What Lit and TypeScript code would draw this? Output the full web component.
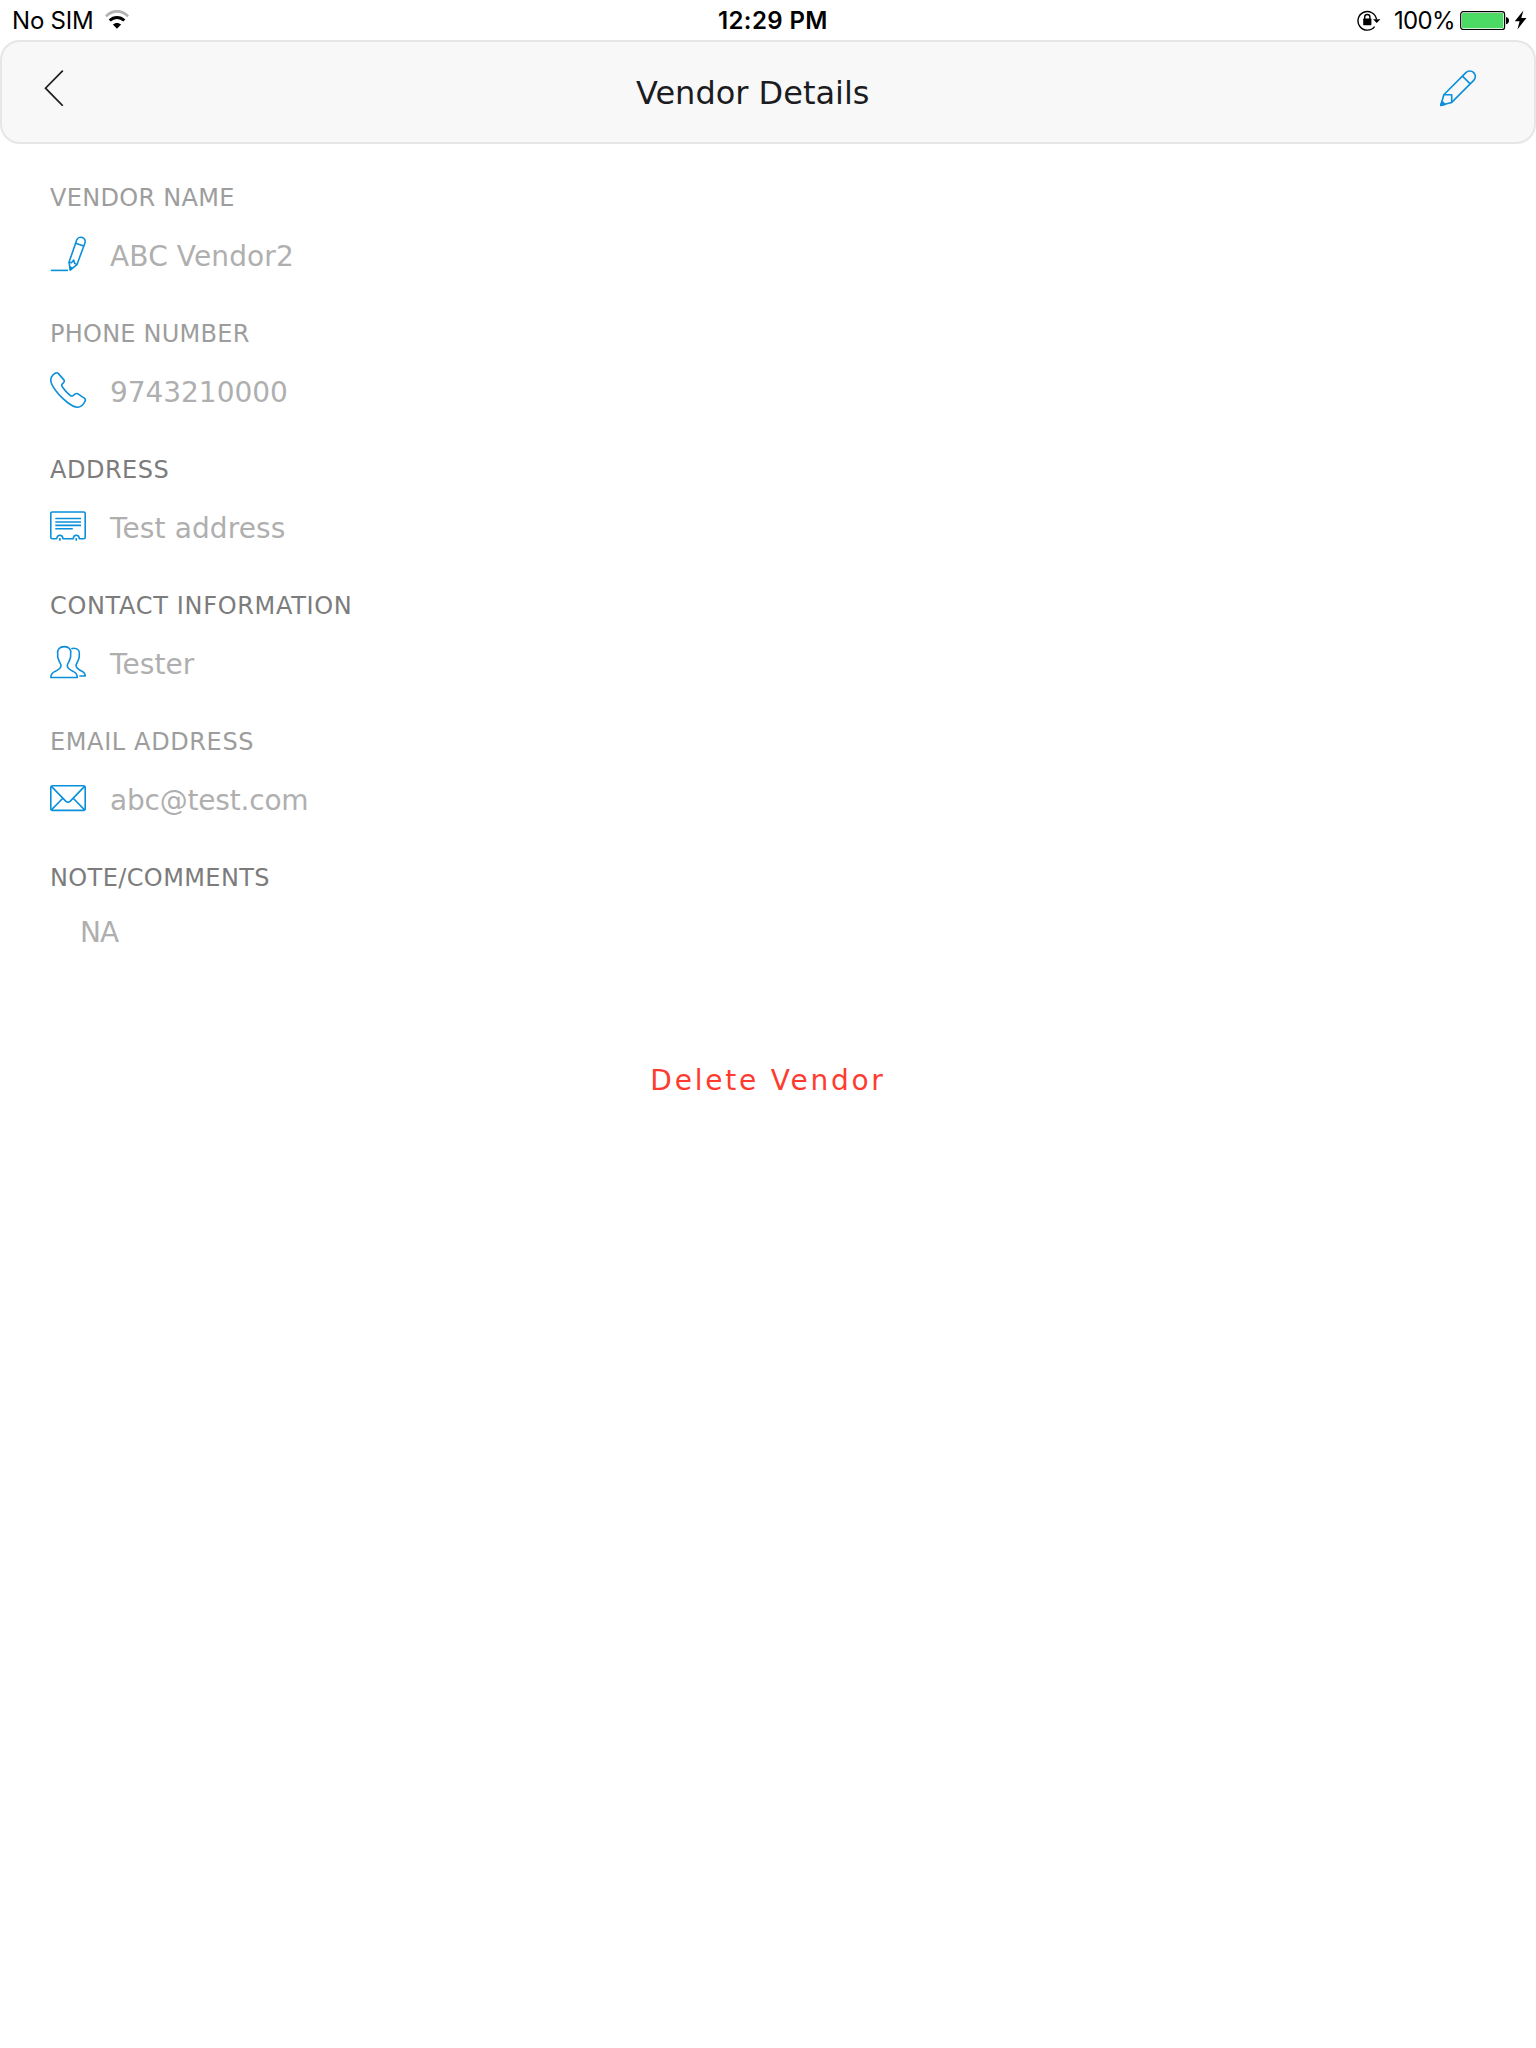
import { LitElement, html, css, svg, nothing, SVGTemplateResult } from "lit";
import { customElement, property } from "lit/decorators.js";
import { styleMap } from "lit/directives/style-map.js";

type IconName = "edit" | "pencil" | "phone" | "card" | "people" | "mail";

const ICONS: Record<IconName, SVGTemplateResult> = {
  edit: svg`
    <path d="M3.8 24.7 25.9 2.6A5.5 5.5 0 0 1 33.7 10.4L11.7 32.4.9 35.2Z"/>
    <path d="M22.4 6.1 30.2 13.9M3.8 24.7H11.7V32.4"/>
    <path d="M.7 35.5 1.9 31.4 4.9 34.4Z" fill="currentColor"/>`,
  pencil: svg`
    <path d="M.8 34.4H18"/>
    <path d="M19 26.3 26.7 4.1A4.3 4.3 0 0 1 34.9 7L27 28.6 20.4 33.9Z"/>
    <path d="M25.6 7.2 33.7 10.1M19 26.3 21.4 26.8 23.8 24.1 24.6 27.4 27 28.6"/>
    <path d="M20.2 34 20 31 22.4 32.2Z" fill="currentColor"/>`,
  phone: svg`
    <path d="M5.2 1.3C6.4.6 7.6.7 8.4 1.6L13.9 7.9C14.6 8.7 14.5 9.5 13.9 10.2L12.2 12.1C11.5 12.9 11.6 13.9 12.2 14.7 14.2 17.6 17 20.8 20.1 23.3 21 24 22.1 24.2 23 23.6L25.2 21.9C26.1 21.3 27 21.3 27.9 21.8L34.3 26.1C35.4 26.9 35.6 28.2 35 29.3 33.6 32.5 31 34.8 28 35.2 25 35.6 21.5 33.5 17.5 30.5 12 26.2 5.6 19.5 2.2 13.2.7 10.2.3 7.6 1.4 5.2 2.2 3.4 3.6 2.2 5.2 1.3Z"/>`,
  card: svg`
    <path d="M6.8 30.8H2.3A1.5 1.5 0 0 1 .8 29.3V5.5A1.5 1.5 0 0 1 2.3 4H33.7A1.5 1.5 0 0 1 35.2 5.5V29.3A1.5 1.5 0 0 1 33.7 30.8H29.4C29.2 28.5 28 27.3 26.3 27.3S23.4 28.5 23.2 30.8H13C12.8 28.5 11.6 27.3 9.9 27.3S7 28.5 6.8 30.8M9.9 32.7V30M26.3 32.7V30"/>
    <path d="M5.3 10.5H31M5.3 14H31M5.3 17.4H31M5.3 20.8H22.8"/>`,
  people: svg`
    <path d="M.8 33.5C.8 30 2.3 28.7 5 27.4 9 25.6 11 24.3 11 21.8 11 19.8 9.6 18.6 9 16.8 8.5 15.2 7.8 14.3 7.7 12.6 7.6 11.6 7.9 11 7.7 9.9 7 5.4 9.8 2.6 14.3 2.6S21.4 5.4 20.7 9.9C20.5 11 20.8 11.6 20.6 12.6 20.4 14.3 19.8 15.2 19.3 16.8 18.7 18.6 17.3 19.8 17.3 21.8 17.3 24.3 19.2 25.6 23.2 27.4 25.9 28.7 27.3 30 27.3 33.5Z"/>
    <path d="M21.3 4.9C22.3 4.3 23.3 4.1 24.3 4.2 28 4.4 29.9 7 29.3 10.6 29.1 11.6 29.4 12.2 29.2 13.2 28.9 14.8 28.4 15.6 27.9 17.1 27.3 18.8 26.1 19.7 26.1 21.6 26.1 24 27.9 25.3 31.4 27 34 28.2 35.2 29.3 35.2 32H29.3"/>`,
  mail: svg`
    <rect x=".8" y="5.7" width="34.4" height="24.7" rx="1.8"/>
    <path d="M1.4 6.4 15.7 21.1Q18 23.3 20.3 21.1L34.6 6.4M1.4 29.9 12.8 18.3M34.6 29.9 23.2 18.3"/>`,
};

interface Field {
  label: string;
  value: string;
  icon?: IconName;
  readonly?: boolean;
  labelTracking: number;
  valueTracking: number;
}

const FIELDS: Field[] = [
  { label: "VENDOR NAME", value: "ABC Vendor2", icon: "pencil", readonly: true, labelTracking: 0.3, valueTracking: 0.13 },
  { label: "PHONE NUMBER", value: "9743210000", icon: "phone", readonly: true, labelTracking: 0.24, valueTracking: -0.04 },
  { label: "ADDRESS", value: "Test address", icon: "card", labelTracking: 0.5, valueTracking: 0.12 },
  { label: "CONTACT INFORMATION", value: "Tester", icon: "people", labelTracking: 0.67, valueTracking: 0.08 },
  { label: "EMAIL ADDRESS", value: "abc@test.com", icon: "mail", readonly: true, labelTracking: 0.62, valueTracking: -0.2 },
  { label: "NOTE/COMMENTS", value: "NA", labelTracking: 0.39, valueTracking: -0.9 },
];

@customElement("line-icon")
export class LineIcon extends LitElement {
  @property() name: IconName = "edit";

  static styles = css`
    :host { display: block; flex: none; width: 36px; height: 36px; color: #0a8fdb; }
    .glyph {
      display: block; width: 36px; height: 36px; overflow: visible;
      fill: none; stroke: currentColor; stroke-width: 1.6; stroke-linejoin: round;
    }
  `;

  render() {
    return html`<svg class="glyph" viewBox="0 0 36 36">${ICONS[this.name]}</svg>`;
  }
}

@customElement("status-bar")
export class StatusBar extends LitElement {
  static styles = css`
    :host {
      display: grid; grid-template-columns: 718px 1fr auto; height: 40px; box-sizing: border-box;
      padding: 6px 9px 0 0; font: 24px/29px Inter, "Liberation Sans", sans-serif; color: #000;
    }
    .group { display: flex; align-items: flex-start; }
    .carrier { padding-left: 12px; letter-spacing: -0.2px; }
    .wifi { margin: 4px 0 0 11px; }
    .clock { font-weight: 600; letter-spacing: 0.38px; }
    .lock { margin-top: 3px; }
    .percent { margin-left: 13px; width: 66px; letter-spacing: -0.7px; }
    .battery { margin-top: 5px; }
    .bolt { margin: 4px 0 0 4px; }
    svg { display: block; }
  `;

  render() {
    return html`
      <div class="group">
        <span class="carrier">No SIM</span>
        <svg class="wifi" width="24" height="20" viewBox="0 0 24 20" fill="none" stroke="#000">
          <path d="M.9 6.4C7.4-.3 16.6-.3 23.1 6.4" stroke="#b3b3b3" stroke-width="2.6"/>
          <path d="M4.7 10.5C9 6.4 15 6.4 19.3 10.5" stroke-width="3"/>
          <path d="M12 18.8 7.9 14.6C10.2 12.4 13.8 12.4 16.1 14.6Z" fill="#000" stroke="none"/>
        </svg>
      </div>
      <div class="clock">12:29 PM</div>
      <div class="group">
        <svg class="lock" width="24" height="22" viewBox="0 0 24 22" fill="none" stroke="#000">
          <path d="M17.6 17.6A9.3 9.3 0 1 1 19.5 10.5" stroke-width="1.4"/>
          <path d="M16 10.2H23.4L19.7 14Z" fill="#000" stroke="none"/>
          <rect x="6.2" y="9.6" width="8.2" height="6.6" rx=".7" fill="#000" stroke="none"/>
          <path d="M7.7 10V8.1A2.6 2.6 0 0 1 12.9 8.1V10" stroke-width="1.4"/>
        </svg>
        <span class="percent">100%</span>
        <svg class="battery" width="50" height="20" viewBox="0 0 50 20">
          <rect x=".7" y=".6" width="43.9" height="17.9" rx="2.6" fill="#fff" stroke="#000" stroke-width="1.2"/>
          <rect x="2" y="1.9" width="41.3" height="15.3" rx="1.2" fill="#4cd964"/>
          <path d="M46 6C50 6.4 50 12.8 46 13.2Z" fill="#000"/>
        </svg>
        <svg class="bolt" width="13" height="20" viewBox="0 0 13 20">
          <path d="M9.4 .4 .8 11.3H5.6L3.4 19.6 12.4 8.1H7.3Z" fill="#000"/>
        </svg>
      </div>
    `;
  }
}

@customElement("nav-header")
export class NavHeader extends LitElement {
  static styles = css`
    :host {
      display: grid; grid-template-columns: 634px 1fr 36px; align-items: start;
      box-sizing: border-box; height: 104px; padding: 28px 58px 0 0;
      background: #f8f8f8; border: 2px solid #e6e6e6; border-radius: 20px;
    }
    .back { display: block; margin-left: 42px; fill: none; stroke: #1d1e22; stroke-width: 1.7; }
    .title {
      margin: 4px 0 0; font: 400 32px/38px "DejaVu Sans", Verdana, sans-serif;
      letter-spacing: 0; color: #1b1b22;
    }
  `;

  render() {
    return html`
      <svg class="back" width="20" height="36" viewBox="0 0 20 36"><path d="M18.8.6 1.5 18.2 18.8 35.8"/></svg>
      <h1 class="title">Vendor Details</h1>
      <line-icon name="edit"></line-icon>
    `;
  }
}

@customElement("vendor-field")
export class VendorField extends LitElement {
  @property({ attribute: false }) field!: Field;

  static styles = css`
    :host { display: grid; gap: 24px; font-family: "DejaVu Sans", Verdana, sans-serif; }
    .label { font-size: 24px; line-height: 28px; color: #7c7c7c; }
    .label.readonly { color: #9d9d9d; }
    .line { display: flex; gap: 24px; font-size: 28px; line-height: 41px; color: #afafaf; }
    .line.plain { padding-left: 30px; line-height: 33px; }
  `;

  render() {
    const f = this.field;
    return html`
      <div class="label ${f.readonly ? "readonly" : ""}" style=${styleMap({ letterSpacing: `${f.labelTracking}px` })}>${f.label}</div>
      <div class="line ${f.icon ? "" : "plain"}">
        ${f.icon ? html`<line-icon .name=${f.icon}></line-icon>` : nothing}
        <span style=${styleMap({ letterSpacing: `${f.valueTracking}px` })}>${f.value}</span>
      </div>
    `;
  }
}

@customElement("app-root")
export class AppRoot extends LitElement {
  static styles = css`
    :host { display: block; min-height: 2048px; background: #fff; }
    .fields { display: grid; gap: 43px; padding: 40px 50px 0; }
    .delete {
      display: block; margin: 115px auto 0; padding: 0; border: 0; background: none; color: #ff3b30;
      font: 28px/33px "DejaVu Sans", Verdana, sans-serif; letter-spacing: 2.77px;
    }
  `;

  render() {
    return html`
      <status-bar></status-bar>
      <nav-header></nav-header>
      <main class="fields">${FIELDS.map((f) => html`<vendor-field .field=${f}></vendor-field>`)}</main>
      <button class="delete">Delete Vendor</button>
    `;
  }
}
